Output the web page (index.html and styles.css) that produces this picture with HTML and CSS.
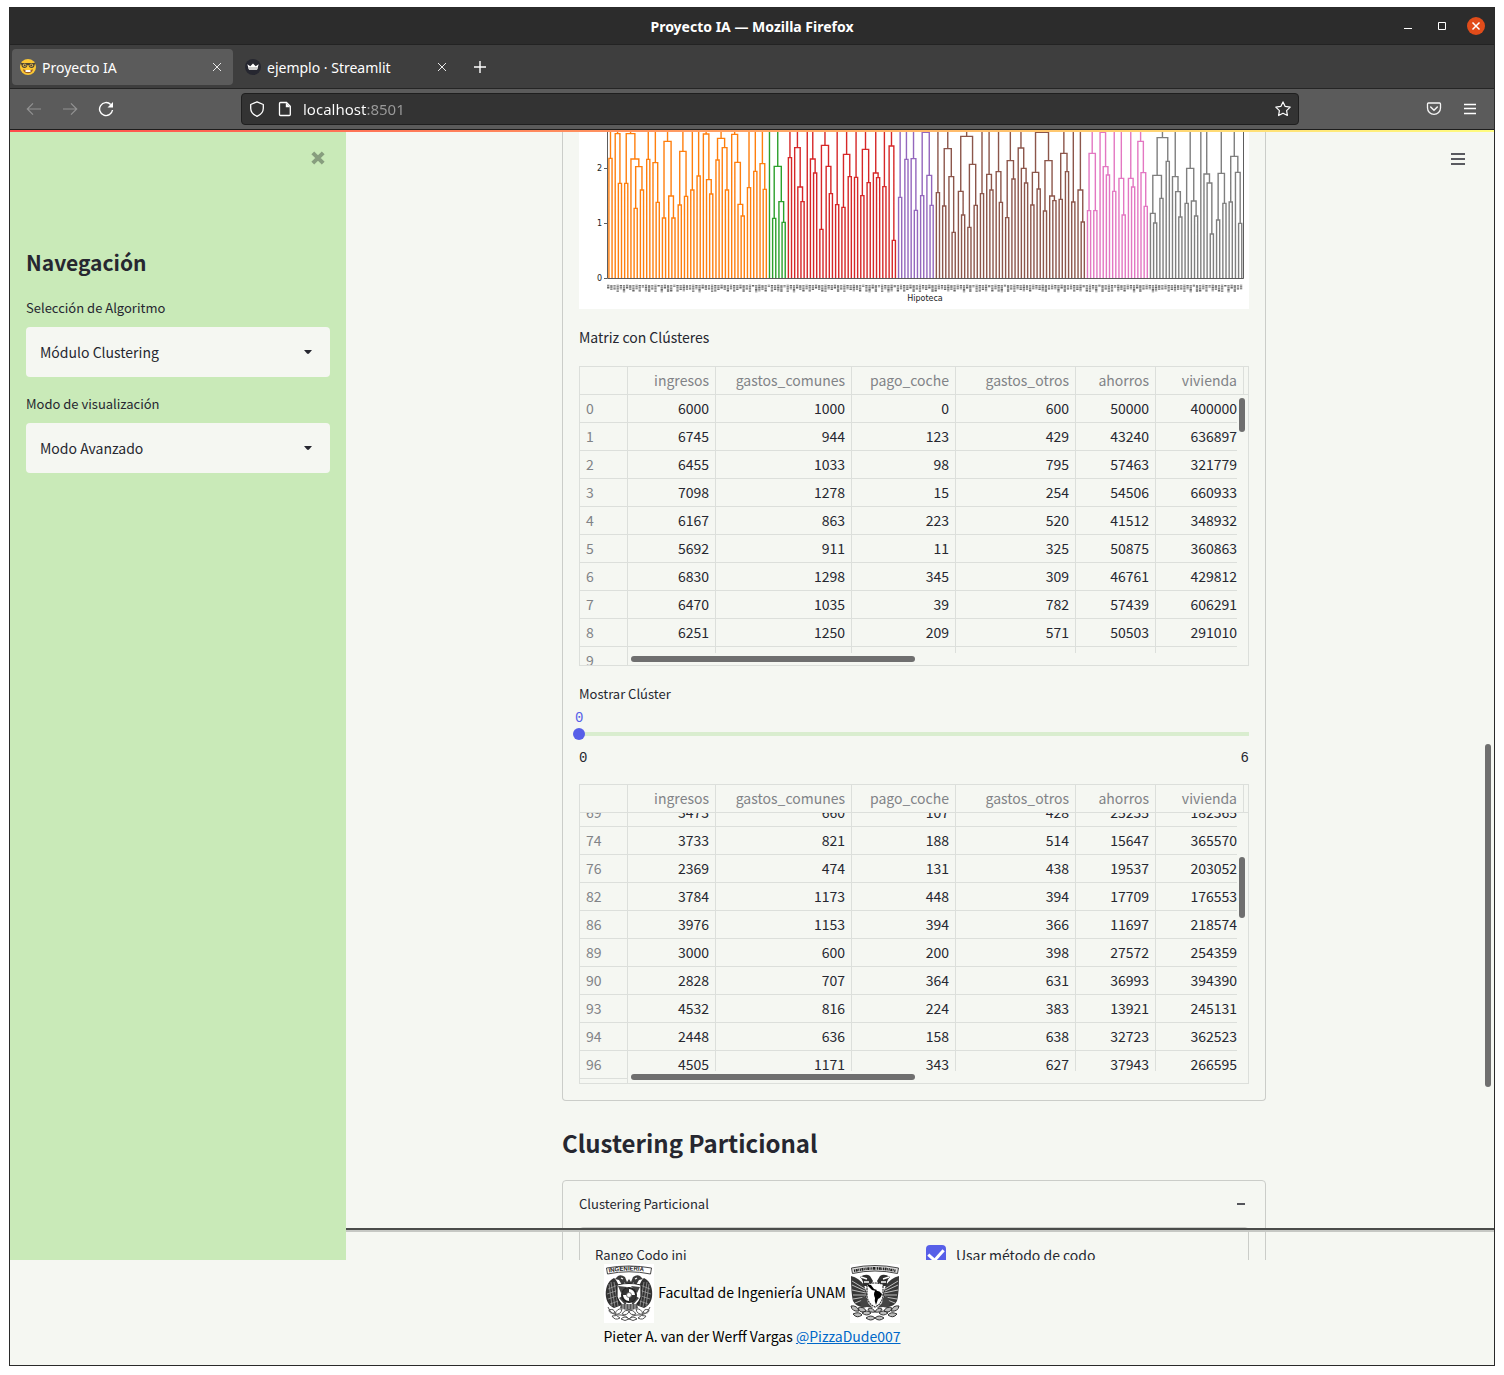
FILE: index.html
```html
<!DOCTYPE html>
<html lang="es">
<head>
<meta charset="utf-8">
<meta name="viewport" content="width=device-width, initial-scale=1">
<title>Proyecto IA</title>
<link rel="stylesheet" href="styles.css">
</head>
<body>
<div class="window">
  <header class="titlebar">
    <span class="window-title">Proyecto IA — Mozilla Firefox</span>
    <div class="window-controls">
      <button class="win-btn" aria-label="Minimizar"><svg width="18" height="18" viewBox="0 0 18 18"><path d="M5 11.5h8" stroke="#fff"/></svg></button>
      <button class="win-btn" aria-label="Maximizar"><svg width="18" height="18" viewBox="0 0 18 18"><path d="M5.5 5.5h7v7h-7z" stroke="#fff" fill="none"/></svg></button>
      <button class="win-btn" aria-label="Cerrar"><svg width="18" height="18" viewBox="0 0 18 18"><circle cx="9" cy="9" r="9" fill="#e14c1a"/><path d="M5.5 5.5l7 7m0-7l-7 7" stroke="#fff" stroke-width="1.5"/></svg></button>
    </div>
  </header>

  <nav class="tabs" aria-label="Pestañas">
    <div class="tab tab-active">
      <svg width="16" height="16" viewBox="0 0 16 16"><circle cx="8" cy="8" r="8" fill="#fcc834"/><path d="M.6 4h14.8v1.5h-.8c0 2.300-1 3.500-3 3.500-1.900 0-2.800-1-3.100-3h-1C7.200 8 6.300 9 4.400 9c-2 0-3-1.200-3-3.500H.6z" fill="#4c4533"/><circle cx="4.600" cy="6.300" r="1.800" fill="#cfae54"/><circle cx="11.400" cy="6.300" r="1.800" fill="#cfae54"/><circle cx="4.800" cy="6.400" r=".8" fill="#4a3420"/><circle cx="11.200" cy="6.400" r=".8" fill="#4a3420"/><path d="M3 10.300c3 1.200 7 1.200 10 0-.4 2.700-2.300 4-5 4s-4.600-1.300-5-4z" fill="#9b5b24"/><path d="M5.500 11h5v2h-5z" fill="#fff"/></svg>
      <span class="tab-label">Proyecto IA</span>
      <button class="icon-btn" aria-label="Cerrar pestaña"><svg width="10" height="10" viewBox="0 0 10 10"><path d="M1 1l8 8m0-8L1 9" stroke="#e8e8e8"/></svg></button>
    </div>
    <div class="tab">
      <svg width="16" height="16" viewBox="0 0 16 16"><circle cx="8" cy="8" r="8" fill="#262730"/><path d="M2.300 5.300l3 2L8 4.500l2.700 2.800 3-2-1.500 4.900q-.3.800-1.200.8H5q-.9 0-1.200-.8z" fill="#fff"/><path d="M3 8l10 0-.7 2.300q-.3.700-1.200.7H5q-.9 0-1.200-.8z" fill="#ccc"/></svg>
      <span class="tab-label">ejemplo · Streamlit</span>
      <button class="icon-btn" aria-label="Cerrar pestaña"><svg width="10" height="10" viewBox="0 0 10 10"><path d="M1 1l8 8m0-8L1 9" stroke="#e8e8e8"/></svg></button>
    </div>
    <button class="icon-btn new-tab" aria-label="Nueva pestaña"><svg width="12" height="12" viewBox="0 0 12 12"><path d="M6 0v12M0 6h12" stroke="#fff" stroke-width="1.400"/></svg></button>
  </nav>

  <div class="toolbar">
    <div class="toolbar-nav">
      <button class="icon-btn" aria-label="Atrás"><svg width="16" height="16" viewBox="0 0 16 16"><path d="M15 8H1.500M7 2.300L1.300 8 7 13.700" stroke="#929292" stroke-width="1.200" fill="none"/></svg></button>
      <button class="icon-btn" aria-label="Adelante"><svg width="16" height="16" viewBox="0 0 16 16"><path d="M1 8h13.500M9 2.300L14.700 8 9 13.700" stroke="#929292" stroke-width="1.200" fill="none"/></svg></button>
      <button class="icon-btn" aria-label="Recargar"><svg width="16" height="16" viewBox="0 0 16 16"><path d="M12.700 3.500A6.500 6.500 0 1 0 14.500 9" stroke="#fff" stroke-width="1.400" fill="none"/><path d="M15 1v5.500H9.500z" fill="#fff"/></svg></button>
    </div>
    <div class="urlbar">
      <svg width="16" height="16" viewBox="0 0 16 16"><path d="M8 .8l6.300 2.700v3.700c0 3.600-2.700 6.500-6.300 8.100C4.400 13.700 1.700 10.800 1.700 7.200V3.500z" stroke="#fff" stroke-width="1.300" fill="none" stroke-linejoin="round"/></svg>
      <svg width="16" height="16" viewBox="0 0 16 16"><path d="M3.500 1.500h6l3.800 3.800v8.200q0 1-1 1H3.500q-1 0-1-1v-11q0-1 1-1z" stroke="#fff" stroke-width="1.300" fill="none"/><path d="M8.800 1.500v4.700h4.500" fill="#fff"/></svg>
      <input class="url" type="text" value="localhost:8501" aria-label="Dirección">
      <button class="icon-btn" aria-label="Marcar página"><svg width="16" height="16" viewBox="0 0 16 16"><path d="M8 .9l2.200 4.500 5 .7-3.600 3.500.8 4.900L8 12.200l-4.400 2.300.8-4.900L.8 6.100l5-.7z" stroke="#fff" stroke-width="1.200" fill="none" stroke-linejoin="round"/></svg></button>
    </div>
    <div class="toolbar-end">
      <button class="icon-btn" aria-label="Guardar en Pocket"><svg width="16" height="16" viewBox="0 0 16 16"><path d="M2.500 2h11q1 0 1 1v4a6.500 6.300 0 0 1-13 0V3q0-1 1-1z" stroke="#f5f5f5" stroke-width="1.300" fill="none"/><path d="M4.700 6L8 9.200 11.300 6" stroke="#f5f5f5" stroke-width="1.500" fill="none" stroke-linecap="round"/></svg></button>
      <button class="icon-btn" aria-label="Menú"><svg width="16" height="16" viewBox="0 0 16 16"><path d="M2 3.500h12M2 7.500h12M2 12.500h12" stroke="#fff" stroke-width="1.300"/></svg></button>
    </div>
  </div>
  <div class="stripe"></div>

  <div class="app">
    <aside class="sidebar">
      <button class="icon-btn sidebar-close" aria-label="Cerrar barra lateral"><svg width="14" height="14" viewBox="0 0 14 14"><path d="M1.800 1.800l10.400 10.400m0-10.400L1.800 12.200" stroke="#879e7e" stroke-width="4"/></svg></button>
      <h2 class="sidebar-title">Navegación</h2>
      <div class="field">
        <label for="algoritmo">Selección de Algoritmo</label>
        <div class="select-box">
          <select id="algoritmo"><option>Módulo Clustering</option></select>
          <svg width="8" height="4" viewBox="0 0 8 4"><path d="M0 0h8L5 3.500q-1 .8-2 0z" fill="#262730"/></svg>
        </div>
      </div>
      <div class="field">
        <label for="modo">Modo de visualización</label>
        <div class="select-box">
          <select id="modo"><option>Modo Avanzado</option></select>
          <svg width="8" height="4" viewBox="0 0 8 4"><path d="M0 0h8L5 3.500q-1 .8-2 0z" fill="#262730"/></svg>
        </div>
      </div>
    </aside>

    <main class="main">
      <button class="icon-btn app-menu" aria-label="Menú de la aplicación"><svg width="14" height="14" viewBox="0 0 14 14"><path d="M0 2h14M0 7h14M0 12h14" stroke="#262730" stroke-width="1.600"/></svg></button>
      <div class="page-scroll"></div>
      <div class="column">
        <section class="panel panel-open">
          <svg class="plot" viewBox="0 0 670 178" role="img" aria-label="Dendrograma">
            <rect width="670" height="177" fill="#fff"/>
            <g id="dendrogram" fill="none"></g>
            <path d="M28.500 0v146.500h636V0M25 146.500h3M25 91.500h3M25 36.500h3" stroke="#333" fill="none" stroke-width=".8"/>
            <g class="plot-text">
              <text x="23" y="39" text-anchor="end">2</text>
              <text x="23" y="94" text-anchor="end">1</text>
              <text x="23" y="149" text-anchor="end">0</text>
              <text x="346" y="169" text-anchor="middle">Hipoteca</text>
            </g>
          </svg>
          <p class="text">Matriz con Clústeres</p>

          <div class="grid-box">
            <table class="data">
              <thead><tr><th></th><th>ingresos</th><th>gastos_comunes</th><th>pago_coche</th><th>gastos_otros</th><th>ahorros</th><th>vivienda</th></tr></thead>
              <tbody>
                <tr><th>0</th><td>6000</td><td>1000</td><td>0</td><td>600</td><td>50000</td><td>400000</td></tr>
                <tr><th>1</th><td>6745</td><td>944</td><td>123</td><td>429</td><td>43240</td><td>636897</td></tr>
                <tr><th>2</th><td>6455</td><td>1033</td><td>98</td><td>795</td><td>57463</td><td>321779</td></tr>
                <tr><th>3</th><td>7098</td><td>1278</td><td>15</td><td>254</td><td>54506</td><td>660933</td></tr>
                <tr><th>4</th><td>6167</td><td>863</td><td>223</td><td>520</td><td>41512</td><td>348932</td></tr>
                <tr><th>5</th><td>5692</td><td>911</td><td>11</td><td>325</td><td>50875</td><td>360863</td></tr>
                <tr><th>6</th><td>6830</td><td>1298</td><td>345</td><td>309</td><td>46761</td><td>429812</td></tr>
                <tr><th>7</th><td>6470</td><td>1035</td><td>39</td><td>782</td><td>57439</td><td>606291</td></tr>
                <tr><th>8</th><td>6251</td><td>1250</td><td>209</td><td>571</td><td>50503</td><td>291010</td></tr>
                <tr><th>9</th><td></td><td></td><td></td><td></td><td></td><td></td></tr>
              </tbody>
            </table>
            <div class="track-y"><div class="thumb-y"></div></div>
            <div class="track-x"><div class="thumb-x"></div></div>
          </div>

          <div class="slider">
            <label for="cluster">Mostrar Clúster</label>
            <output class="slider-value" for="cluster">0</output>
            <input id="cluster" type="range" min="0" max="6" value="0">
            <div class="slider-ends"><span>0</span><span>6</span></div>
          </div>

          <div class="grid-box grid-scrolled">
            <table class="data">
              <thead><tr><th></th><th>ingresos</th><th>gastos_comunes</th><th>pago_coche</th><th>gastos_otros</th><th>ahorros</th><th>vivienda</th></tr></thead>
              <tbody>
                <tr><th>69</th><td>3473</td><td>660</td><td>107</td><td>428</td><td>25235</td><td>182365</td></tr>
                <tr><th>74</th><td>3733</td><td>821</td><td>188</td><td>514</td><td>15647</td><td>365570</td></tr>
                <tr><th>76</th><td>2369</td><td>474</td><td>131</td><td>438</td><td>19537</td><td>203052</td></tr>
                <tr><th>82</th><td>3784</td><td>1173</td><td>448</td><td>394</td><td>17709</td><td>176553</td></tr>
                <tr><th>86</th><td>3976</td><td>1153</td><td>394</td><td>366</td><td>11697</td><td>218574</td></tr>
                <tr><th>89</th><td>3000</td><td>600</td><td>200</td><td>398</td><td>27572</td><td>254359</td></tr>
                <tr><th>90</th><td>2828</td><td>707</td><td>364</td><td>631</td><td>36993</td><td>394390</td></tr>
                <tr><th>93</th><td>4532</td><td>816</td><td>224</td><td>383</td><td>13921</td><td>245131</td></tr>
                <tr><th>94</th><td>2448</td><td>636</td><td>158</td><td>638</td><td>32723</td><td>362523</td></tr>
                <tr><th>96</th><td>4505</td><td>1171</td><td>343</td><td>627</td><td>37943</td><td>266595</td></tr>
                <tr><th></th><td></td><td></td><td></td><td></td><td></td><td></td></tr>
              </tbody>
            </table>
            <div class="track-y"><div class="thumb-y"></div></div>
            <div class="track-x"><div class="thumb-x"></div></div>
          </div>
        </section>

        <h1 class="heading">Clustering Particional</h1>

        <section class="panel">
          <button class="panel-head" aria-expanded="true">
            <span>Clustering Particional</span>
            <svg width="16" height="16" viewBox="0 0 16 16"><path d="M4 8h8" stroke="#54555b" stroke-width="2"/></svg>
          </button>
          <div class="form">
            <label class="small" for="rango">Rango Codo ini</label>
            <label class="check"><input type="checkbox" checked>Usar método de codo</label>
            <input id="rango" class="number" type="number" value="2">
          </div>
        </section>
      </div>
      <div class="rule"></div>
    </main>
  </div>

  <footer class="footer">
    <div class="footer-line">
      <svg class="crest" viewBox="0 0 50 59" role="img" aria-label="Facultad de Ingeniería">
        <rect width="50" height="59" fill="#fff"/>
        <path d="M2.500 4Q25 0 47.500 4l-1 6Q25 5.500 3.500 10z" fill="#fff" stroke="#333" stroke-width=".9"/>
        <path id="arco" d="M5 8.500Q25 4.500 47 8.500" fill="none"/>
        <text class="crest-text"><textPath href="#arco">INGENIERIA</textPath></text>
        <path d="M14 12q3-2 7 1l2 5 2-3 2 3 2-5q4-3 7-1l3 3-4 1-3 5 4 3-11 2-11-2 4-3-3-5-4-1z" fill="#3b3b3b"/>
        <path d="M17 14l2 1m14-1l-2 1M20 19l3 2m7-2l-3 2" stroke="#fff" stroke-width="1.200"/>
        <path d="M10 14C3 17 1 26 2 33c1 6 4 9 8 11l8-3-3-18q-2-7-5-9zM40 14c7 3 9 12 8 19-1 6-4 9-8 11l-8-3 3-18q2-7 5-9z" fill="#333"/>
        <path d="M5 20l3 22M7 18l4 25M10 18l4 24M4 25l10-4M3 30l12-4M4 35l12-4M6 40l11-4M45 20l-3 22M43 18l-4 25M40 18l-4 24M46 25l-10-4M47 30l-12-4M46 35l-12-4M44 40l-11-4" stroke="#bbb" stroke-width=".6"/>
        <path d="M13 21q12-3 24 0l0 12q-3 9-12 12-9-3-12-12z" fill="#fff" stroke="#222" stroke-width="1.200"/>
        <path d="M14 22l9 1-6 6zM27 22l9 1-3 6zM15 34l5-3 3 12zM35 34l-5-3-3 12z" fill="#444"/>
        <circle cx="25" cy="31" r="7" fill="#fff" stroke="#222" stroke-width="2"/>
        <path d="M25 24a7 7 0 0 0-7 7h7zM25 38a7 7 0 0 0 7-7h-7z" fill="#333"/>
        <circle cx="25" cy="31" r="2.500" fill="#fff" stroke="#555" stroke-width=".8"/>
        <path d="M17 40l16 0 1 4q-9 4-18 0z" fill="#555"/>
        <path d="M19 40v5m3-5v5m3-5v5m3-5v5m3-5v5" stroke="#ddd" stroke-width=".7"/>
        <g fill="none" stroke="#555" stroke-width="1">
          <path d="M4 43q3 9 13 8 5 0 8 4 3-4 8-4 10 1 13-8"/>
          <path d="M5 46q5-2 6 3-6 1-6-3zM11 50q2-6 7-5-1 6-7 5zM8 52q5-2 8 2-5 3-8-2zM18 50q3-5 7-3-1 5-7 3zM17 55q4-4 8 0-4 3-8 0zM45 46q-5-2-6 3 6 1 6-3zM39 50q-2-6-7-5 1 6 7 5zM42 52q-5-2-8 2 5 3 8-2zM32 50q-3-5-7-3 1 5 7 3zM33 55q-4-4-8 0 4 3 8 0z"/>
        </g>
      </svg>
      <span>Facultad de Ingeniería UNAM</span>
      <svg class="crest" viewBox="0 0 50 59" role="img" aria-label="UNAM">
        <rect width="50" height="59" fill="#fff"/>
        <path d="M1.500 4Q25-1 48.500 4l-1 5.500Q25 4.500 2.500 9.500z" fill="#ddd" stroke="#333" stroke-width=".9"/>
        <path d="M4 6.800Q25 2 46 6.800" stroke="#222" stroke-width="2.600" stroke-dasharray="1.200 .6 2 .5 .8 .7" fill="none"/>
        <path d="M10 13q6-4 10-1l3 5-3 5-8 0q3-4-2-9zM40 13q-6-4-10-1l-3 5 3 5 8 0q-3-4 2-9z" fill="#2e2e2e"/>
        <path d="M11 13l6 2m22-2l-6 2M14 18l5 0m17 0l-5 0" stroke="#fff" stroke-width="1.400"/>
        <path d="M1 12q8 2 13 9l3 9-3 13q-8 0-11-6Q1 30 1 12zM49 12q-8 2-13 9l-3 9 3 13q8 0 11-6 2-7 2-25z" fill="#383838"/>
        <path d="M2 17l13 8M2 21l13 6M2 26l14 3M3 31h13M3 35l12-2M5 39l10-4M48 17l-13 8M48 21l-13 6M48 26l-14 3M47 31H34M47 35l-12-2M45 39l-10-4" stroke="#ddd" stroke-width=".8"/>
        <path d="M17 20q8-2 16 0v12q-1 8-8 11-7-3-8-11z" fill="#fff" stroke="#333" stroke-width="1.200" stroke-dasharray="2 .6"/>
        <path d="M17 20l4 1 3 4 3 1-1 1-4-1-4-4zM25 27q4-1 7 3-1 4-4 5l-2 6q-2-4-1-7-2-4 0-7z" fill="#000"/>
        <path d="M13 32l4 2 1 5 5 5-6-1-5 1-2-5zM37 32l-4 2-1 5-5 5 6-1 5 1 2-5z" fill="#444"/>
        <g fill="#bbb" stroke="#333" stroke-width="1">
          <path d="M1 42q6-1 8 5-7 1-8-5zM8 44q6-2 8 3-6 3-8-3zM3 50q6-3 9 1-5 4-9-1zM12 49q5-4 9 0-4 4-9 0zM18 45q5-2 7 3-6 1-7-3zM16 54q5-4 9 0-4 4-9 0zM49 42q-6-1-8 5 7 1 8-5zM42 44q-6-2-8 3 6 3 8-3zM47 50q-6-3-9 1 5 4 9-1zM38 49q-5-4-9 0 4 4 9 0zM32 45q-5-2-7 3 6 1 7-3zM34 54q-5-4-9 0 4 4 9 0z"/>
        </g>
      </svg>
    </div>
    <div class="footer-line"><span>Pieter A. van der Werff Vargas <a href="#pizzadude">@PizzaDude007</a></span></div>
  </footer>
</div>
<script src="dendrogram.js"></script>
</body>
</html>
```
FILE: dendrogram.js
```js
// A leaf is 0. A merge is [y, left, right], with y measured down from the
// top edge of the visible part of the plot, in thirds of a pixel.
const pair = y => [y, 0, 0];
const clusters = [
  ['#ff7f0e', [
    pair(79), [5, 0, pair(154)],
    [5, pair(154), [81, 0, [104, pair(229), pair(174)]]],
    pair(82), [92, 0, pair(211)],
    [28, pair(258), [192, 0, pair(258)]],
    [58, pair(219), pair(193)],
    pair(174), pair(132), [6, 0, [143, 0, pair(186)]],
    [19, pair(84), [47, 0, pair(174)]],
    [7, 0, [91, 0, [217, 0, pair(252)]]],
    pair(167), pair(118), [95, 0, pair(172)]
  ]],
  ['#2ca02c', [0, [103, pair(259), [209, 0, pair(271)]]]],
  ['#d62728', [
    pair(77), [47, 0, [165, 0, pair(209)]], 0, [81, 0, pair(123)],
    [40, pair(292), [103, 0, pair(185)]],
    pair(218), [67, pair(226), pair(134)], pair(136),
    [52, pair(191), pair(152)], [123, 0, pair(137)],
    pair(164), [42, 0, pair(325)]
  ]],
  ['#9467bd', [
    pair(196), pair(82), [80, 0, pair(235)],
    [1, pair(191), [130, 0, pair(220)]]
  ]],
  ['#8c564b', [
    pair(182), [50, pair(222), [134, 0, pair(301)]],
    [13, [178, 0, pair(249)], [97, pair(286), pair(220)]],
    pair(185), [127, 0, pair(174)], [119, 0, pair(211)],
    [86, pair(257), pair(141)], [48, 0, [109, 0, pair(153)]],
    [1, [121, pair(219), pair(171)], [86, pair(237), [192, 0, pair(206)]]],
    [64, pair(202), pair(119)], pair(210), [174, 0, pair(270)]
  ]],
  ['#e377c2', [
    [64, pair(236), pair(236)], [1, 0, [104, 0, pair(129)]],
    pair(178), [139, 0, pair(249)], [139, 0, pair(165)],
    [28, 0, [122, 0, pair(223)]]
  ]],
  ['#7f7f7f', [
    [17, [130, [244, 0, pair(273)], pair(199)], pair(88)],
    [134, 0, [179, 0, pair(255)]],
    [109, pair(214), [207, 0, pair(252)]],
    0, [126, 0, [153, 0, pair(306)]],
    [124, pair(264), pair(214)],
    [73, pair(210), [121, 0, pair(274)]]
  ]]
];

const base = 439;
const left = 85;
const leafCount = 202;
const pitch = 1908 / leafCount;
const group = document.getElementById('dendrogram');
let leaf = 0;

function addPath(d, stroke, width, dash) {
  const path = document.createElementNS('http://www.w3.org/2000/svg', 'path');
  path.setAttribute('d', d);
  path.setAttribute('stroke', stroke);
  path.setAttribute('stroke-width', width);
  if (dash) path.setAttribute('stroke-dasharray', dash);
  group.appendChild(path);
}

// Returns the x of the node's stem and the y where that stem begins.
function walk(node, out) {
  if (node === 0) {
    const x = left + pitch * (leaf + 0.5);
    leaf += 1;
    return { x, y: base };
  }
  const a = walk(node[1], out);
  const b = walk(node[2], out);
  out.push(`M${a.x} ${a.y}V${node[0]}H${b.x}V${b.y}`);
  return { x: (a.x + b.x) / 2, y: node[0] };
}

group.setAttribute('transform', 'scale(0.33333)');
for (const [color, roots] of clusters) {
  const out = [];
  for (const root of roots) {
    const top = walk(root, out);
    out.push(`M${top.x} ${top.y}V0`);
  }
  addPath(out.join(''), color, 4.2);
}

// Leaf ticks: one to three small marks under every leaf.
for (let i = 0; i < leafCount; i += 1) {
  const x = left + pitch * (i + 0.5);
  const marks = 1 + ((i * 7 + 3) % 5 > 0) + ((i * 11) % 7 > 2);
  addPath(`M${x - 2} ${458 + (i % 3)}v${marks * 7}`, '#666', 7, i % 2 ? '2 1.5 3 1' : '3 1 1.5 1.5');
}
```
FILE: styles.css
```css
* { box-sizing: border-box; }

:root {
  --page: #f5f7f2;
  --ink: #262730;
  --line: #dcdfdb;
  --accent: #575fe8;
  --sans: "Noto Sans CJK SC", "Noto Sans", sans-serif;
  --chrome: "Noto Sans", "Open Sans", sans-serif;
  --mono: "Liberation Mono", monospace;
}

body {
  margin: 0;
  height: 100vh;
  padding: 7px 9px 9px;
  background: #fff;
  color: var(--ink);
  font: 14px/24px var(--sans);
  overflow: hidden;
}

p, h1, h2 { margin: 0; }
svg { display: block; flex: none; }
button { font: inherit; color: inherit; }

.window {
  display: flex;
  flex-direction: column;
  height: 100%;
  border: 1px solid #2a2a2a;
  background: var(--page);
}

.icon-btn, .win-btn {
  display: flex;
  border: 0;
  padding: 0;
  background: none;
}

/* Browser chrome */
.titlebar {
  display: grid;
  grid-template-columns: 1fr auto 1fr;
  align-items: center;
  height: 37px;
  padding: 0 9px;
  border-bottom: 1px solid #232323;
  background: #2c2c2c;
  color: #fff;
  font-family: var(--chrome);
}
.window-title { grid-column: 2; padding-top: 2px; font-weight: 700; }
.window-controls { display: flex; justify-content: flex-end; gap: 16px; }

.tabs {
  display: flex;
  align-items: center;
  gap: 4px;
  height: 44px;
  padding: 0 2px;
  border-bottom: 1px solid #252525;
  background: #3e3e3e;
  color: #fff;
  font-family: var(--chrome);
}
.tab {
  display: flex;
  align-items: center;
  gap: 6px;
  width: 221px;
  height: 36px;
  padding: 0 11px 0 8px;
  border-radius: 4px;
}
.tab-active { background: #5b5b5b; }
.tab-label { flex: 1; padding-top: 2px; }
.new-tab { margin-left: 12px; }

.toolbar {
  display: flex;
  align-items: center;
  height: 41px;
  border-bottom: 1px solid #1d1d1d;
  background: #5b5b5b;
  font-family: var(--chrome);
}
.toolbar-nav { display: flex; gap: 20px; width: 231px; padding-left: 16px; }
.toolbar-end { display: flex; justify-content: flex-end; gap: 20px; width: 195px; padding-right: 16px; }
.urlbar {
  display: flex;
  flex: 1;
  align-items: center;
  gap: 12px;
  height: 32px;
  padding: 0 7px;
  border: 1px solid #1f1f1f;
  border-radius: 4px;
  background: #333;
}
.url {
  flex: 1;
  min-width: 0;
  border: 0;
  padding: 0;
  margin-left: -2px;
  font: 15px/24px var(--chrome);
  background: linear-gradient(90deg, #fff 64px, #9b9b9b 64px);
  -webkit-background-clip: text;
  background-clip: text;
  color: transparent;
}
.stripe { height: 2px; background: linear-gradient(90deg, #ff4b4b, #fffd80); }

/* App */
.app { display: flex; flex: 1; min-height: 0; }

.sidebar {
  display: flex;
  flex-direction: column;
  width: 336px;
  padding: 19px 16px;
  background: #c9eab8;
}
.sidebar-close { align-self: flex-end; margin-right: 5px; }
.sidebar-title { margin: 79px 0 17px; font-size: 21px; line-height: 36px; font-weight: 600; }
.field { margin-bottom: 16px; }
.field label { display: block; height: 30px; font-size: 13px; line-height: 22px; }
.select-box { display: grid; align-items: center; }
.select-box > * { grid-area: 1 / 1; }
.select-box select {
  appearance: none;
  width: 100%;
  height: 50px;
  border: 0;
  border-radius: 4px;
  padding: 0 14px;
  background: var(--page);
  color: var(--ink);
  font: 14px/24px var(--sans);
}
.select-box svg { justify-self: end; margin-right: 18px; pointer-events: none; }

.main {
  position: relative;
  flex: 1;
  min-width: 0;
  padding-right: 12px;
  overflow: hidden;
}
.app-menu { position: absolute; top: 20px; right: 29px; }
.page-scroll {
  position: absolute;
  top: 612px;
  right: 3px;
  width: 6px;
  height: 343px;
  border-radius: 3px;
  background: #6f6f6f;
}
.rule {
  position: absolute;
  right: 0;
  bottom: 28px;
  left: 0;
  height: 4px;
  border-top: 2px solid #4a4c4a;
  background: #c6c8c4;
}

.column { max-width: 704px; margin: 0 auto; }
.panel {
  padding: 0 16px 16px;
  border: 1px solid #cbcdc9;
  border-radius: 4px;
}
.panel-open { border-top: 0; border-radius: 0 0 4px 4px; }
.plot { width: 100%; height: auto; }
.plot-text { font: 8px "DejaVu Sans", sans-serif; fill: #222; }
.text { margin: 15px 0 17px; }

.grid-box {
  position: relative;
  height: 300px;
  border: 1px solid var(--line);
  overflow: hidden;
}
.data { display: block; }
.data thead, .data tbody { display: block; overflow: hidden; }
.data tbody { height: 270px; }
.data tr {
  display: grid;
  grid-template-columns: 48px 88fr 136fr 104fr 120fr 80fr 88fr;
  padding-right: 4px;
  border-bottom: 1px solid var(--line);
}
.data th, .data td {
  height: 27px;
  padding: 0 6px;
  border-right: 1px solid var(--line);
  line-height: 27px;
  text-align: right;
  white-space: nowrap;
}
.data th { color: #818387; font-weight: 400; }
.data tbody th { text-align: left; }
.grid-scrolled tbody tr:first-child { margin-top: -14px; }

.track-y {
  position: absolute;
  top: 28px;
  right: 0;
  bottom: 0;
  width: 11px;
  background: var(--page);
}
.thumb-y { width: 6px; height: 34px; margin: 3px 0 0 2px; border-radius: 3px; background: #6f6f6f; }
.grid-scrolled .thumb-y { height: 61px; margin-top: 44px; }
.track-x {
  position: absolute;
  right: 0;
  bottom: 0;
  left: 48px;
  height: 12px;
  padding: 3px 0 3px 3px;
  background: var(--page);
}
.thumb-x { width: 46%; height: 6px; border-radius: 3px; background: #6f6f6f; }

.slider { display: flex; flex-direction: column; padding: 16px 0 14px; }
.slider label { font-size: 13px; }
.slider-value {
  margin-left: -4px;
  padding-top: 2px;
  color: var(--accent);
  font: 14px/20px var(--mono);
}
.slider input {
  appearance: none;
  height: 12px;
  margin: 0 -6px;
  background: linear-gradient(#d9edcf, #d9edcf) center / calc(100% - 12px) 4px no-repeat;
}
.slider input::-webkit-slider-thumb {
  appearance: none;
  width: 12px;
  height: 12px;
  border-radius: 50%;
  background: var(--accent);
}
.slider-ends {
  display: flex;
  justify-content: space-between;
  margin-top: 6px;
  font: 14px/24px var(--mono);
}

.heading { padding: 24px 0 19px; font-size: 24px; line-height: 36px; font-weight: 600; }

.panel-head {
  display: flex;
  align-items: center;
  justify-content: space-between;
  width: 100%;
  height: 46px;
  border: 0;
  padding: 0;
  background: none;
  font-size: 13px;
}
.form {
  display: grid;
  grid-template-columns: 1fr 1fr;
  column-gap: 24px;
  padding: 15px;
  border: 1px solid #cbcdc9;
  border-radius: 4px;
}
.small { font-size: 13px; }
.check { display: flex; align-items: center; gap: 10px; }
.check input {
  appearance: none;
  width: 20px;
  height: 20px;
  margin: 0;
  border-radius: 4px;
  background: var(--accent);
  display: grid;
  place-items: center;
}
.check input::after {
  content: "";
  width: 7px;
  height: 12px;
  margin-bottom: 4px;
  border: solid #fff;
  border-width: 0 3px 3px 0;
  transform: rotate(42deg);
}
.number { height: 44px; border: 0; background: #c9eab8; }

/* Footer */
.footer {
  display: flex;
  flex-direction: column;
  height: 105px;
  padding-top: 4px;
  color: #000;
}
.footer-line { display: flex; align-items: center; justify-content: center; gap: 4px; }
.footer-line span { padding-bottom: 3px; }
.footer-line:last-child { padding-top: 1px; }
.footer a { color: #0068c9; }
.crest { width: 50px; height: 59px; }
.crest-text { font: bold 6px "Liberation Sans", sans-serif; fill: #222; }
```
